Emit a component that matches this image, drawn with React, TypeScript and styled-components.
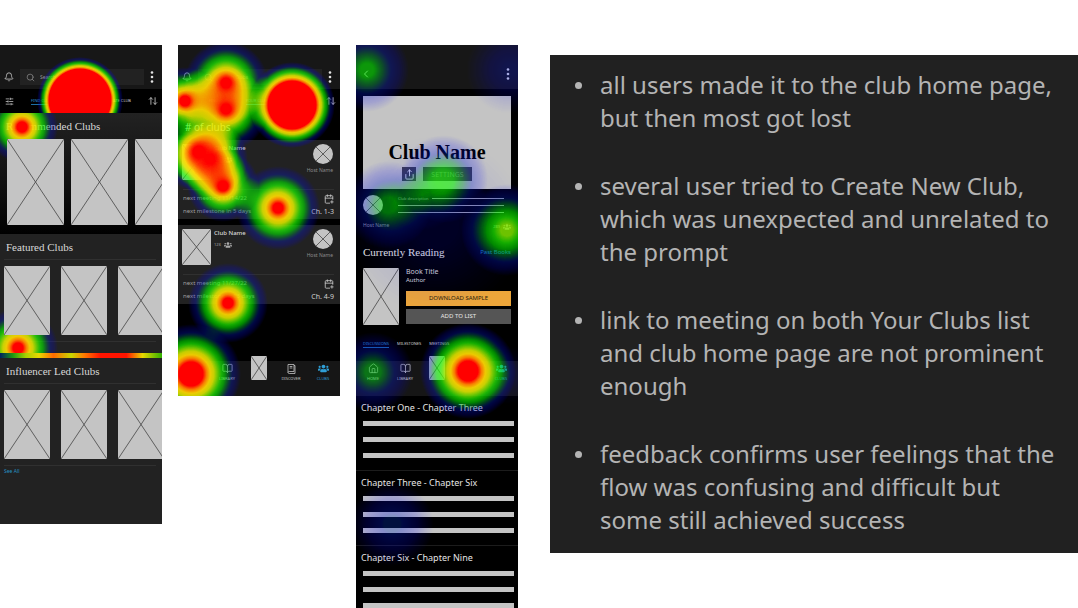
import React, { useId } from "react";
import styled, { createGlobalStyle } from "styled-components";
import {
  ArrowUpDown,
  Bell,
  BookOpen,
  CalendarPlus,
  ChevronLeft,
  Home,
  Search,
  Share,
  SlidersHorizontal,
} from "lucide-react";
import { FaUsers } from "react-icons/fa";

const sans = `"Noto Sans", "Liberation Sans", sans-serif`;
const serif = `"Liberation Serif", serif`;

const GlobalStyle = createGlobalStyle`
  *, *::before, *::after { box-sizing: border-box; }
  body { margin: 0; background: #fff; font-family: ${sans}; }
  h1, h2, h3, p, ul { margin: 0; padding: 0; font-weight: 400; }
  button, input { font: inherit; border: 0; padding: 0; background: none; color: inherit; }
  a { color: inherit; text-decoration: none; }
  svg { display: block; flex: none; }
`;

/* ---------- heat map ---------- */

type Spot = { x: number; y: number; r: number; core?: number; peak?: number };

const HeatSvg = styled.svg`
  position: absolute;
  inset: 0;
  width: 100%;
  height: 100%;
  overflow: hidden;
  pointer-events: none;
`;

function Heat({ spots }: { spots: Spot[] }) {
  const id = useId().replace(/[^a-zA-Z0-9]/g, "");
  return (
    <HeatSvg aria-hidden="true">
      <defs>
        <filter
          id={`${id}scale`}
          x="0"
          y="0"
          width="100%"
          height="100%"
          filterUnits="userSpaceOnUse"
          colorInterpolationFilters="sRGB"
        >
          <feColorMatrix values="0 0 0 1 0  0 0 0 1 0  0 0 0 1 0  0 0 0 1 0" />
          <feComponentTransfer>
            <feFuncR type="table" tableValues="0 0 0 0 0 .12 .5 .88 1 1 1" />
            <feFuncG type="table" tableValues="0 0 .1 .6 .95 1 .95 .92 .85 .5 0" />
            <feFuncB type="table" tableValues="1 1 .85 .25 0 0 0 0 0 0 0" />
            <feFuncA type="table" tableValues="0 .18 .31 .43 .56 .68 .8 .88 .93 .97 1" />
          </feComponentTransfer>
        </filter>
        {spots.map((s, i) => {
          const core = (s.core ?? 0) / s.r;
          const peak = s.peak ?? 1;
          return (
            <radialGradient key={i} id={`${id}g${i}`}>
              <stop offset={core} stopColor="#000" stopOpacity={peak} />
              <stop offset={core + (1 - core) * 0.7} stopColor="#000" stopOpacity={peak * 0.27} />
              <stop offset={1} stopColor="#000" stopOpacity={0} />
            </radialGradient>
          );
        })}
      </defs>
      <g filter={`url(#${id}scale)`}>
        {spots.map((s, i) => (
          <circle key={i} cx={s.x} cy={s.y} r={s.r} fill={`url(#${id}g${i})`} />
        ))}
      </g>
    </HeatSvg>
  );
}

/* ---------- shared parts ---------- */

const Slide = styled.main`
  display: flex;
  align-items: flex-start;
  gap: 16px;
  padding-top: 45px;
`;

const Phone = styled.section`
  position: relative;
  flex: 0 0 162px;
  overflow: hidden;
  background: #000;
  color: #d8d8d8;
`;

const TopBlock = styled.div`
  position: relative;
  overflow: hidden;
`;

const TopBar = styled.header<{ $plain?: boolean }>`
  display: flex;
  align-items: center;
  justify-content: space-between;
  gap: 6px;
  height: 44px;
  padding: ${(p) => (p.$plain ? "14px 8px 0 4px" : "20px 8px 0 4px")};
  background: #171717;
`;

const IconButton = styled.button`
  display: flex;
  align-items: center;
  justify-content: center;
  color: #c8c8c8;
`;

const SearchBox = styled.label`
  display: flex;
  flex: 1;
  align-items: center;
  gap: 5px;
  height: 16px;
  padding: 0 6px;
  background: #222;
  color: #888;
`;

const SearchInput = styled.input`
  flex: 1;
  min-width: 0;
  font-size: 5px;
  line-height: 8px;
  outline: 0;
  &::placeholder { color: #999; opacity: 1; }
`;

const TabBar = styled.nav`
  display: flex;
  align-items: center;
  justify-content: space-between;
  height: 24px;
  padding: 0 4px 0 5px;
`;

const TabGroup = styled.div`
  display: flex;
  gap: 14px;
`;

const Tab = styled.button<{ $active?: boolean }>`
  border-bottom: 1px solid ${(p) => (p.$active ? "#1d6fa5" : "transparent")};
  color: ${(p) => (p.$active ? "#2a8fd0" : "#d0d0d0")};
  font-size: 4px;
  line-height: 6px;
  white-space: nowrap;
`;

const Cross = styled.svg<{ $w: number; $h: number; $round?: boolean }>`
  width: ${(p) => p.$w}px;
  height: ${(p) => p.$h}px;
  border-radius: ${(p) => (p.$round ? "50%" : "0")};
  background: #c4c4c4;
  stroke: #444;
  stroke-width: 0.8;
`;

function Placeholder({ w, h, round }: { w: number; h: number; round?: boolean }) {
  return (
    <Cross $w={w} $h={h} $round={round} aria-hidden="true">
      <line x1="0" y1="0" x2="100%" y2="100%" />
      <line x1="100%" y1="0" x2="0" y2="100%" />
    </Cross>
  );
}

function Dots() {
  return (
    <svg width="4" height="14" viewBox="0 0 4 14" fill="#e4e4e4" aria-hidden="true">
      <circle cx="2" cy="2.5" r="1.3" />
      <circle cx="2" cy="7" r="1.3" />
      <circle cx="2" cy="11.5" r="1.3" />
    </svg>
  );
}

function SearchHeader() {
  return (
    <TopBar>
      <IconButton aria-label="Notifications"><Bell size={10} /></IconButton>
      <SearchBox>
        <Search size={9} />
        <SearchInput type="search" placeholder="Search Clubs" aria-label="Search Clubs" />
      </SearchBox>
      <IconButton aria-label="More"><Dots /></IconButton>
    </TopBar>
  );
}

function ClubTabs({ active }: { active: number }) {
  return (
    <TabBar>
      <IconButton aria-label="Filter"><SlidersHorizontal size={9} /></IconButton>
      <TabGroup>
        {["FIND CLUBS", "YOUR CLUBS", "CREATE CLUB"].map((t, i) => (
          <Tab key={t} $active={i === active}>{t}</Tab>
        ))}
      </TabGroup>
      <IconButton aria-label="Sort"><ArrowUpDown size={10} /></IconButton>
    </TabBar>
  );
}

const NavBar = styled.nav`
  display: grid;
  grid-template-columns: repeat(5, 1fr);
  height: 35px;
  padding: 0 1px;
  background: #161616;
`;

const NavButton = styled.button<{ $active?: boolean }>`
  display: flex;
  flex-direction: column;
  align-items: center;
  gap: 2px;
  padding-top: 2px;
  color: ${(p) => (p.$active ? "#2f9fd6" : "#c4c4c4")};
  font-size: 4px;
  line-height: 6px;
`;

const NavCover = styled.button`
  display: flex;
  justify-content: center;
  margin-top: -5px;
`;

function BottomNav() {
  return (
    <NavBar>
      <NavButton><Home size={11} strokeWidth={1.7} />HOME</NavButton>
      <NavButton><BookOpen size={11} strokeWidth={1.7} />LIBRARY</NavButton>
      <NavCover aria-label="Current book"><Placeholder w={16} h={24} /></NavCover>
      <NavButton>
        <svg width="11" height="11" viewBox="0 0 11 11" fill="none" stroke="currentColor" strokeWidth="0.8" aria-hidden="true">
          <path d="M2 1.5h6v7H3.2A1.2 1.2 0 0 0 2 9.5zM8 2.5h1v8H3.2A1.2 1.2 0 0 1 2 9.5M3.7 3.5h2.7M3.7 5h2.7" />
        </svg>
        DISCOVER
      </NavButton>
      <NavButton $active><FaUsers size={11} />CLUBS</NavButton>
    </NavBar>
  );
}

/* ---------- screen one: find clubs ---------- */

const Shelf = styled.section<{ $fade?: boolean; $bottom: number }>`
  position: relative;
  overflow: hidden;
  padding-bottom: ${(p) => p.$bottom}px;
  background: ${(p) => (p.$fade ? "linear-gradient(#222, #0c0c0c 70%, #000)" : "#222")};
`;

const ShelfTitle = styled.h2`
  padding: 6px 6px 5px;
  font-family: ${serif};
  font-size: 11px;
  line-height: 14px;
  white-space: nowrap;
`;

const Rule = styled.hr`
  height: 1px;
  margin: 0 6px 0 4px;
  border: 0;
  background: #303030;
`;

const Covers = styled.div<{ $large?: boolean }>`
  position: relative;
  z-index: 1;
  display: flex;
  gap: ${(p) => (p.$large ? "7px" : "11px")};
  padding: ${(p) => (p.$large ? "1px 0 0 7px" : "6px 0 6px 4px")};
`;

const HotStrip = styled.div`
  height: 5px;
  background: linear-gradient(90deg, #002060, #1c9a10 8%, #a8d000 16%, #e8d800 24%, #ff6a00 33%, #c8d800 44%, #ff7a00 52%, #ff1400 62%, #ff1400 78%, #e8d800 88%, #30b000 100%);
`;

const SeeAll = styled.a`
  display: block;
  padding-left: 4px;
  color: #2592c4;
  font-size: 5px;
  line-height: 10px;
`;

function Row({ large }: { large?: boolean }) {
  return (
    <Covers $large={large}>
      {[0, 1, 2].map((i) => (
        <Placeholder key={i} w={large ? 57 : 46} h={large ? 86 : 69} />
      ))}
    </Covers>
  );
}

function FindClubs() {
  return (
    <Phone aria-label="Find clubs screen">
      <TopBlock>
        <SearchHeader />
        <ClubTabs active={0} />
        <Heat spots={[{ x: 80, y: 55, r: 43, core: 31 }]} />
      </TopBlock>
      <Shelf $fade $bottom={9}>
        <ShelfTitle>Recommended Clubs</ShelfTitle>
        <Heat spots={[{ x: 22, y: 14, r: 36, core: 5 }]} />
        <Row large />
      </Shelf>
      <Shelf $bottom={11}>
        <ShelfTitle>Featured Clubs</ShelfTitle>
        <Rule />
        <Heat spots={[{ x: 18, y: 114, r: 40, core: 5 }]} />
        <Row />
        <Rule />
      </Shelf>
      <HotStrip />
      <Shelf $bottom={48}>
        <ShelfTitle>Influencer Led Clubs</ShelfTitle>
        <Rule />
        <Row />
        <Rule />
        <SeeAll href="#all">See All</SeeAll>
      </Shelf>
    </Phone>
  );
}

/* ---------- screen two: your clubs ---------- */

const CountTitle = styled.h2`
  height: 27px;
  padding: 7px 7px 0;
  color: #fff;
  font-size: 10px;
  line-height: 14px;
`;

const ClubList = styled.div`
  display: flex;
  flex-direction: column;
  gap: 6px;
  padding-bottom: 57px;
`;

const ClubCard = styled.article`
  height: 79px;
  padding: 4px 6px 0 4px;
  background: #222;
`;

const ClubTop = styled.div`
  display: flex;
  gap: 3px;
  height: 45px;
  padding-right: 1px;
`;

const ClubInfo = styled.div`
  flex: 1;
`;

const ClubName = styled.h3`
  font-size: 6px;
  line-height: 8px;
  font-weight: 500;
`;

const Members = styled.p`
  display: flex;
  align-items: center;
  gap: 3px;
  padding-top: 4px;
  color: #aaa;
  font-size: 4px;
  line-height: 8px;
`;

const Host = styled.div`
  display: flex;
  flex-direction: column;
  align-items: flex-end;
  gap: 2px;
  color: #8a8a8a;
  font-size: 5px;
  line-height: 8px;
`;

const ClubFacts = styled.div`
  border-top: 1px solid #303030;
  margin-left: 1px;
  padding-top: 2px;
`;

const Fact = styled.p`
  display: flex;
  align-items: center;
  justify-content: space-between;
  height: 13px;
  color: #a0a0a0;
  font-size: 6px;
  line-height: 13px;
`;

const Chapters = styled.span`
  color: #d0d0d0;
  font-size: 7px;
`;

function Club({ date, days, chapters }: { date: string; days: number; chapters: string }) {
  return (
    <ClubCard>
      <ClubTop>
        <Placeholder w={29} h={36} />
        <ClubInfo>
          <ClubName>Club Name</ClubName>
          <Members>123 <FaUsers size={8} /></Members>
        </ClubInfo>
        <Host>
          <Placeholder w={20} h={20} round />
          Host Name
        </Host>
      </ClubTop>
      <ClubFacts>
        <Fact>next meeting {date}<IconButton aria-label="Add to calendar"><CalendarPlus size={10} /></IconButton></Fact>
        <Fact>next milestone in {days} days<Chapters>{chapters}</Chapters></Fact>
      </ClubFacts>
    </ClubCard>
  );
}

function YourClubs() {
  return (
    <Phone aria-label="Your clubs screen">
      <SearchHeader />
      <ClubTabs active={1} />
      <CountTitle># of clubs</CountTitle>
      <ClubList>
        <Club date="11/14/22" days={5} chapters="Ch. 1-3" />
        <Club date="11/27/22" days={13} chapters="Ch. 4-9" />
      </ClubList>
      <BottomNav />
      <Heat
        spots={[
          { x: 7, y: 56, r: 34, core: 5 },
          { x: 48, y: 38, r: 42, core: 5 },
          { x: 48, y: 64, r: 42, core: 5 },
          { x: 28, y: 56, r: 26, peak: 0.2 },
          { x: 114, y: 60, r: 43, core: 24 },
          { x: 21, y: 107, r: 40, core: 6 },
          { x: 32, y: 114, r: 38, core: 5 },
          { x: 39, y: 128, r: 24, core: 4, peak: 0.4 },
          { x: 45, y: 141, r: 36, core: 5 },
          { x: 100, y: 163, r: 42, core: 5 },
          { x: 50, y: 258, r: 40, core: 5 },
          { x: 13, y: 329, r: 50, core: 12 },
        ]}
      />
    </Phone>
  );
}

/* ---------- screen three: club home ---------- */

const Hero = styled.div`
  display: flex;
  flex-direction: column;
  align-items: center;
  gap: 2px;
  height: 93px;
  margin: 7px 7px 0 7px;
  padding-top: 43px;
  background: #c4c4c4;
  color: #000;
`;

const HeroTitle = styled.h1`
  font-family: ${serif};
  font-size: 20px;
  font-weight: 700;
  line-height: 26px;
`;

const HeroActions = styled.div`
  display: flex;
  gap: 7px;
`;

const DarkButton = styled.button<{ $wide?: boolean }>`
  display: flex;
  align-items: center;
  justify-content: center;
  width: ${(p) => (p.$wide ? "49px" : "14px")};
  height: 14px;
  background: #404040;
  color: ${(p) => (p.$wide ? "#8a8a8a" : "#ffffff")};
  font-size: 7px;
`;

const About = styled.div`
  display: flex;
  gap: 15px;
  padding: 6px 14px 0 7px;
`;

const Description = styled.div`
  display: flex;
  flex: 1;
  flex-direction: column;
  gap: 6px;
`;

const DescriptionLead = styled.p`
  display: flex;
  align-items: center;
  gap: 3px;
  height: 7px;
  margin-bottom: -3px;
  color: #aaa;
  font-size: 4px;
`;

const ThinLine = styled.span`
  display: block;
  flex: 1 0 1px;
  height: 1px;
  max-height: 1px;
  background: #aaa;
`;

const SplitRow = styled.div<{ $top: number }>`
  display: flex;
  align-items: center;
  justify-content: space-between;
  padding: ${(p) => p.$top}px 7px 0;
  color: #999;
  font-size: 5px;
  line-height: 8px;
`;

const ReadingTitle = styled.h2`
  color: #e4e4e4;
  font-family: ${serif};
  font-size: 11px;
  line-height: 14px;
`;

const PastBooks = styled.a`
  color: #1f86cc;
  font-size: 6px;
`;

const Book = styled.div`
  display: flex;
  gap: 7px;
  padding: 9px 7px 0;
`;

const BookInfo = styled.div`
  display: flex;
  flex: 1;
  flex-direction: column;
`;

const BookTitle = styled.h3`
  font-size: 7px;
  line-height: 8px;
`;

const Author = styled.p`
  padding-bottom: 6px;
  font-size: 6px;
  line-height: 9px;
`;

const WideButton = styled.button<{ $primary?: boolean }>`
  height: 15px;
  margin-bottom: 3px;
  background: ${(p) => (p.$primary ? "#eda63a" : "#555")};
  color: ${(p) => (p.$primary ? "#2a1c08" : "#e8e8e8")};
  font-size: 6px;
  line-height: 15px;
`;

const DetailTabs = styled.nav`
  display: flex;
  align-items: flex-start;
  gap: 8px;
  height: 20px;
  margin-top: 14px;
  padding: 0 7px;
`;

const Chapter = styled.section`
  display: flex;
  flex-direction: column;
  gap: 11px;
  padding: 5px 4px 12px 7px;
  border-bottom: 1px solid #1c1c1c;
  &:last-of-type { padding-bottom: 0; border: 0; }
`;

const ChapterTitle = styled.h3`
  margin: 0 0 -5px -2px;
  color: #e4e4e4;
  font-size: 9px;
  line-height: 14px;
`;

const Bar = styled.div`
  height: 5px;
  background: #c4c4c4;
`;

function ClubHome() {
  return (
    <Phone aria-label="Club home screen">
      <TopBar $plain>
        <IconButton aria-label="Back"><ChevronLeft size={12} /></IconButton>
        <IconButton aria-label="More"><Dots /></IconButton>
      </TopBar>
      <Hero>
        <HeroTitle>Club Name</HeroTitle>
        <HeroActions>
          <DarkButton aria-label="Share"><Share size={11} /></DarkButton>
          <DarkButton $wide>SETTINGS</DarkButton>
        </HeroActions>
      </Hero>
      <About>
        <Placeholder w={20} h={20} round />
        <Description>
          <DescriptionLead>Club description <ThinLine /></DescriptionLead>
          <ThinLine />
          <ThinLine />
        </Description>
      </About>
      <SplitRow $top={4}>
        Host Name
        <Members as="span">289 <FaUsers size={8} /></Members>
      </SplitRow>
      <SplitRow $top={14}>
        <ReadingTitle>Currently Reading</ReadingTitle>
        <PastBooks href="#past">Past Books</PastBooks>
      </SplitRow>
      <Book>
        <Placeholder w={36} h={57} />
        <BookInfo>
          <BookTitle>Book Title</BookTitle>
          <Author>Author</Author>
          <WideButton $primary>DOWNLOAD SAMPLE</WideButton>
          <WideButton>ADD TO LIST</WideButton>
        </BookInfo>
      </Book>
      <DetailTabs>
        <Tab $active>DISCUSSIONS</Tab>
        <Tab>MILESTONES</Tab>
        <Tab>MEETINGS</Tab>
      </DetailTabs>
      <BottomNav />
      {["Chapter One - Chapter Three", "Chapter Three - Chapter Six", "Chapter Six - Chapter Nine"].map((t) => (
        <Chapter key={t}>
          <ChapterTitle>{t}</ChapterTitle>
          <Bar />
          <Bar />
          <Bar />
        </Chapter>
      ))}
      <Heat
        spots={[
          { x: 11, y: 25, r: 42, core: 6, peak: 0.42 },
          { x: 154, y: 25, r: 44, core: 6, peak: 0.16 },
          { x: 88, y: 134, r: 44, core: 8, peak: 0.4 },
          { x: 32, y: 160, r: 44, core: 8, peak: 0.34 },
          { x: 66, y: 150, r: 36, peak: 0.14 },
          { x: 151, y: 185, r: 46, core: 6, peak: 0.6 },
          { x: 80, y: 180, r: 90, core: 20, peak: 0.08 },
          { x: 17, y: 327, r: 40, core: 8, peak: 0.36 },
          { x: 112, y: 326, r: 48, core: 10 },
          { x: 150, y: 330, r: 30, peak: 0.1 },
          { x: 36, y: 479, r: 42, core: 8, peak: 0.22 },
        ]}
      />
    </Phone>
  );
}

/* ---------- findings ---------- */

const Findings = styled.ul`
  display: flex;
  flex: 1;
  flex-direction: column;
  gap: 35px;
  margin: 10px 0 0 16px;
  padding: 13px 16px 17px 25px;
  background: #212121;
  color: #b4b4b4;
  font-size: 24px;
  line-height: 33px;
  list-style: none;
`;

const Finding = styled.li`
  display: flex;
  gap: 18px;
  &::before {
    content: "";
    flex: none;
    width: 7px;
    height: 7px;
    margin-top: 14px;
    border-radius: 50%;
    background: #b4b4b4;
  }
`;

export default function App() {
  return (
    <>
      <GlobalStyle />
      <Slide>
        <FindClubs />
        <YourClubs />
        <ClubHome />
        <Findings>
          <Finding>all users made it to the club home page, but then most got lost</Finding>
          <Finding>several user tried to Create New Club, which was unexpected and unrelated to the prompt</Finding>
          <Finding>link to meeting on both Your Clubs list and club home page are not prominent enough</Finding>
          <Finding>feedback confirms user feelings that the flow was confusing and difficult but some still achieved success</Finding>
        </Findings>
      </Slide>
    </>
  );
}
